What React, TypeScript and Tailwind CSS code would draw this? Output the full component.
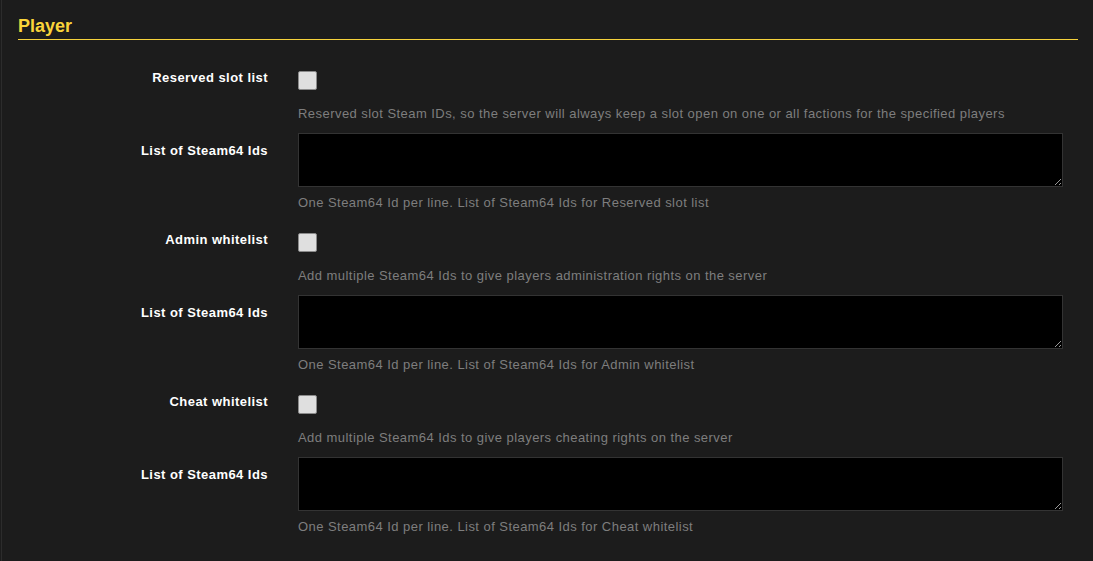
import React from "react";

interface Entry {
  label: string;
  help: string;
  listHelp: string;
}

const entries: Entry[] = [
  {
    label: "Reserved slot list",
    help: "Reserved slot Steam IDs, so the server will always keep a slot open on one or all factions for the specified players",
    listHelp: "One Steam64 Id per line. List of Steam64 Ids for Reserved slot list",
  },
  {
    label: "Admin whitelist",
    help: "Add multiple Steam64 Ids to give players administration rights on the server",
    listHelp: "One Steam64 Id per line. List of Steam64 Ids for Admin whitelist",
  },
  {
    label: "Cheat whitelist",
    help: "Add multiple Steam64 Ids to give players cheating rights on the server",
    listHelp: "One Steam64 Id per line. List of Steam64 Ids for Cheat whitelist",
  },
];

const EntryBlock = ({ entry }: { entry: Entry }) => (
  <div className="mb-[18px]">
    {/* checkbox row */}
    <div className="flex gap-[30px]">
      <label className="w-[250px] shrink-0 pt-[1px] text-right text-[13px] leading-[18px] tracking-[0.45px] font-bold text-white">
        {entry.label}
      </label>
      <div className="flex-1">
        <input
          type="checkbox"
          className="block mt-[3px] appearance-none w-[19px] h-[19px] rounded-[2px] border border-[#8a8a8a] bg-[#dfdfdf]"
        />
        <p className="mt-[15px] text-[13px] leading-[18px] tracking-[0.45px] text-[#7e7e7e]">
          {entry.help}
        </p>
      </div>
    </div>

    {/* textarea row */}
    <div className="flex gap-[30px] mt-[10px]">
      <label className="w-[250px] shrink-0 pt-[9px] text-right text-[13px] leading-[18px] tracking-[0.45px] font-bold text-white">
        List of Steam64 Ids
      </label>
      <div className="w-[765px]">
        <textarea className="block w-full h-[54px] bg-black border border-[#333333] resize-y outline-none text-white text-[13px] [color-scheme:dark]" />
        <p className="mt-[7px] text-[13px] leading-[18px] tracking-[0.45px] text-[#7e7e7e]">
          {entry.listHelp}
        </p>
      </div>
    </div>
  </div>
);

export default function App() {
  return (
    <div
      className="w-[1093px] h-[561px] overflow-hidden bg-[#1c1c1c] pl-[1px]"
      style={{ fontFamily: '"Liberation Sans", Arial, sans-serif' }}
    >
      <div className="h-full border-l border-[#2c2c2c] pl-[16px] pr-[15px]">
        <h2 className="pt-[15px] pb-[2px] text-[18px] leading-[22px] font-bold text-[#fad43a] border-b border-[#f6d23c]">
          Player
        </h2>
        <div className="mt-[28px]">
          {entries.map((e, i) => (
            <EntryBlock key={i} entry={e} />
          ))}
        </div>
      </div>
    </div>
  );
}
